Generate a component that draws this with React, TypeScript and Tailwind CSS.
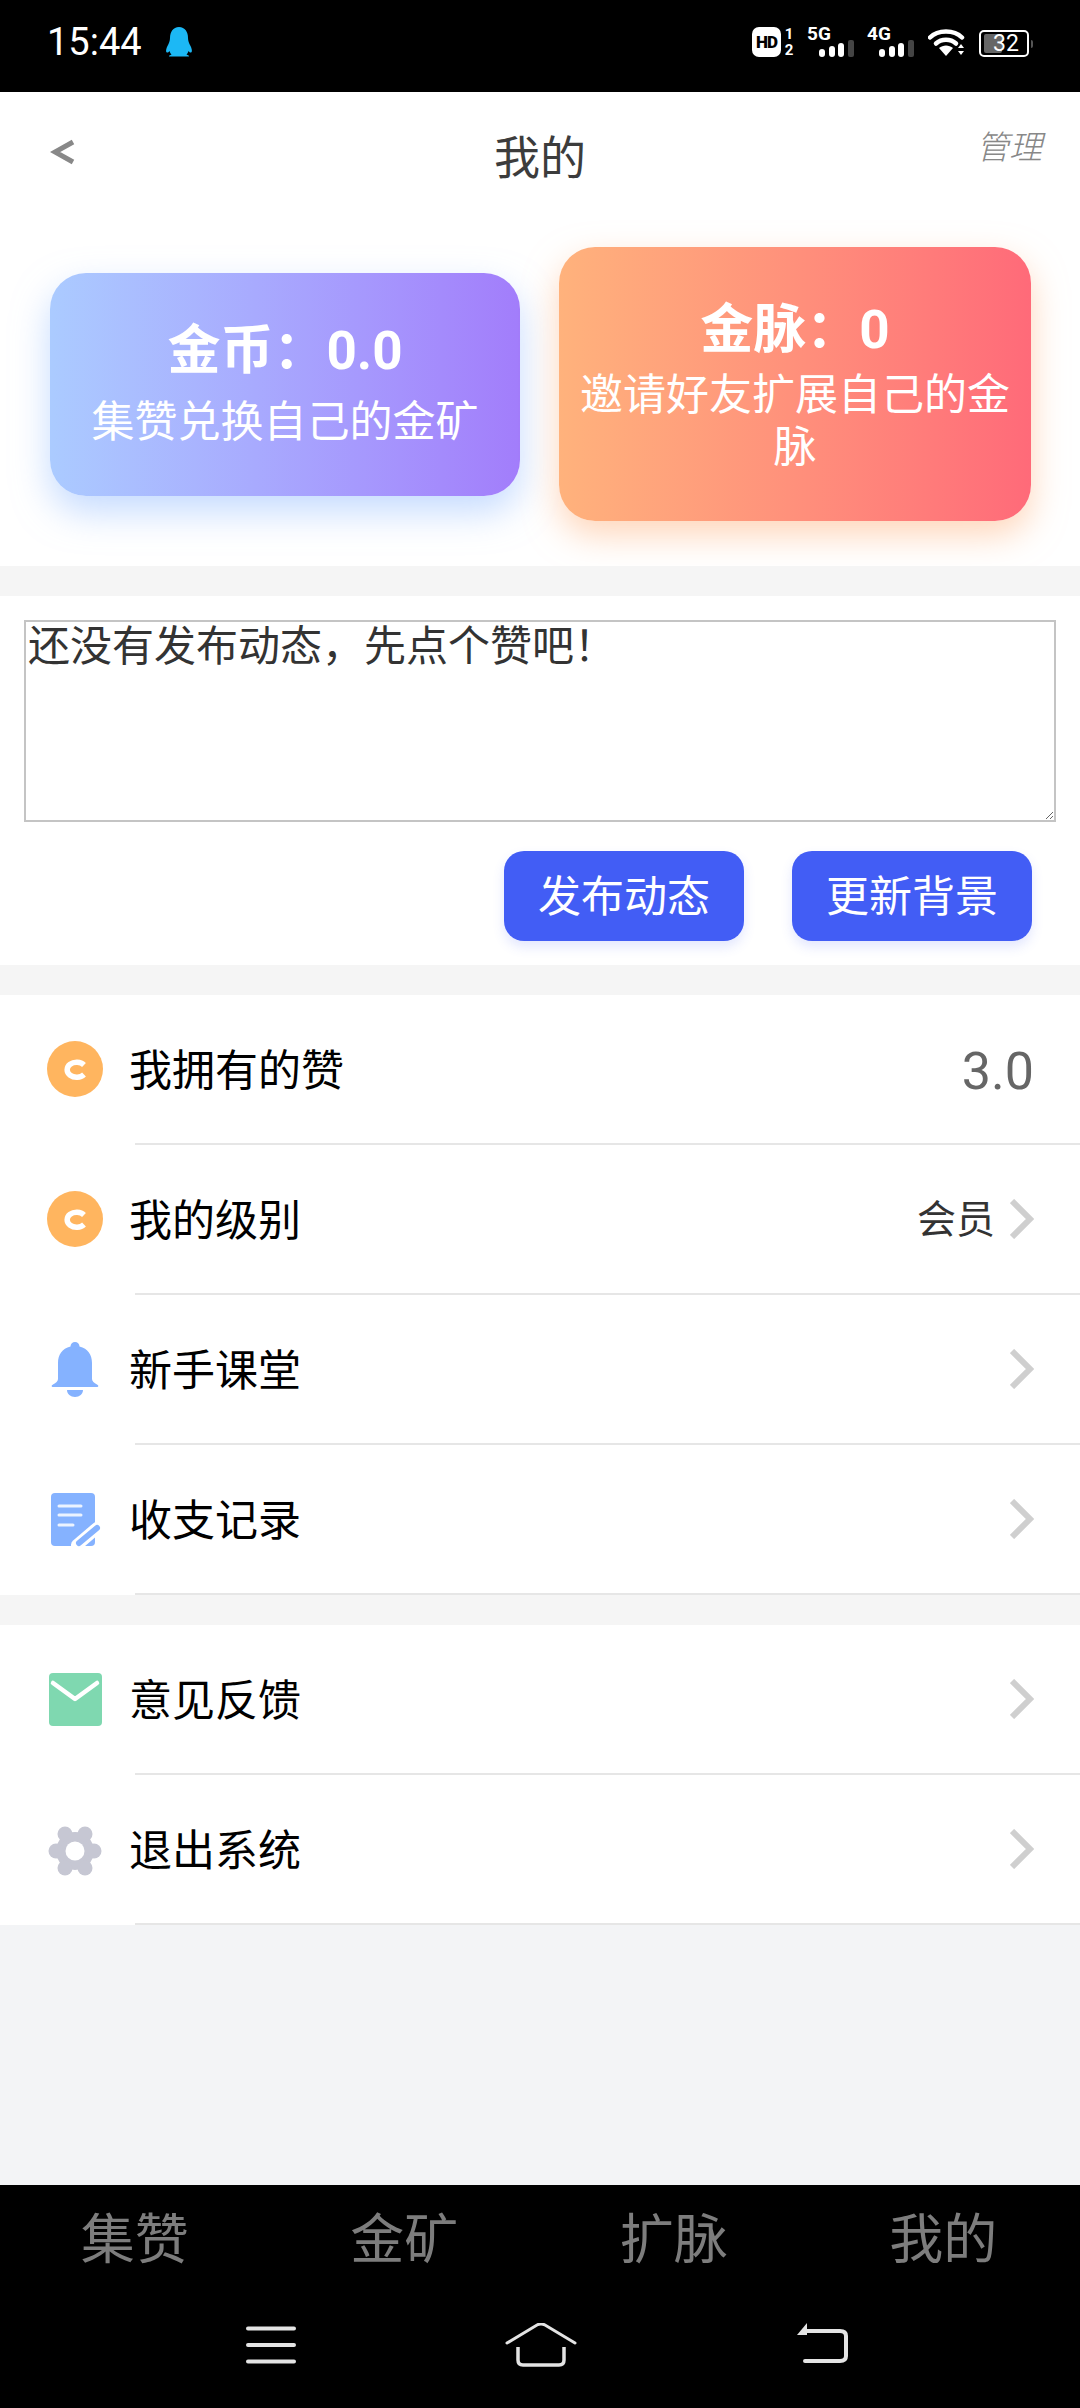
import React from "react";

const Signal = ({ label }: { label: string }) => (
  <div className="flex w-[48px] flex-col">
    <span className="h-[13px] text-[19px] leading-[13px] font-bold text-white">{label}</span>
    <svg width="36" height="17" viewBox="0 0 36 17" className="ml-[12px] block">
      <rect x="0" y="9" width="6" height="8" rx="3" fill="#fff" />
      <rect x="10" y="6" width="6" height="11" rx="3" fill="#fff" />
      <rect x="19" y="3" width="6" height="14" rx="3" fill="#fff" />
      <rect x="29" y="0" width="6" height="17" rx="2" fill="#444" />
    </svg>
  </div>
);

const Coin = () => (
  <svg width="56" height="56" viewBox="0 0 56 56">
    <circle cx="28" cy="28" r="28" fill="#ffb55f" />
    <path d="M37 24 A9.500 7.500 0 1 0 37 33.500" fill="none" stroke="#fff" strokeWidth="5.500" />
  </svg>
);

const Bell = () => (
  <svg width="56" height="56" viewBox="0 -1 56 56">
    <path d="M28 0a4.5 4.5 0 0 1 4.5 4.5C41 6.500 45 13 45 21v16c0 2 2 4 5 5.500 2 1 1.500 2.500 0 2.500H6c-1.500 0-2-1.500 0-2.500 3-1.500 5-3.500 5-5.500V21c0-8 4-14.500 12.500-16.500A4.500 4.500 0 0 1 28 0z" fill="#85b2ff" />
    <path d="M20 48h16c0 4-3.500 7-8 7s-8-3-8-7z" fill="#85b2ff" />
  </svg>
);

const Doc = () => (
  <svg width="56" height="56" viewBox="0 -1 56 56">
    <rect x="4" y="1" width="44" height="53" rx="4" fill="#85b2ff" />
    <path d="M12 14h22M12 23h22M12 33h14" stroke="#fff" strokeWidth="3" strokeLinecap="round" opacity="0.85" />
    <path d="M30 53 L50 36" stroke="#fff" strokeWidth="12" strokeLinecap="round" />
    <path d="M32 51 L50 36" stroke="#85b2ff" strokeWidth="6" strokeLinecap="round" />
  </svg>
);

const Mail = () => (
  <svg width="56" height="56" viewBox="0 -1 56 56">
    <rect x="2" y="1" width="53" height="53" rx="4" fill="#7fd8b0" />
    <path d="M6 11 L28 27 L50 11" fill="none" stroke="#fff" strokeWidth="4.500" strokeLinecap="round" strokeLinejoin="round" />
  </svg>
);

const Gear = () => (
  <svg width="56" height="56" viewBox="0 -2 56 56">
    <g fill="#c6c7d3">
      <circle cx="28" cy="28" r="19" />
      <circle cx="18" cy="11" r="7.500" />
      <circle cx="38" cy="11" r="7.500" />
      <circle cx="9" cy="28" r="7.500" />
      <circle cx="47" cy="28" r="7.500" />
      <circle cx="18" cy="45" r="7.500" />
      <circle cx="38" cy="45" r="7.500" />
    </g>
    <circle cx="28" cy="28" r="9.500" fill="#fff" />
  </svg>
);

const Chevron = () => (
  <svg width="24" height="40" viewBox="0 0 24 40" className="block">
    <path d="M2 2 L20 20 L2 38" fill="none" stroke="#cfcfcf" strokeWidth="6" />
  </svg>
);

const Row = ({
  icon,
  label,
  value,
  chevron = true,
}: {
  icon: React.ReactNode;
  label: string;
  value?: React.ReactNode;
  chevron?: boolean;
}) => (
  <div>
    <div className="flex h-[148px] items-center pr-[46px] pl-[47px]">
      <div className="h-[56px] w-[56px]">{icon}</div>
      <span className="ml-[26px] pt-[4px] text-[43px] leading-none text-black">{label}</span>
      <div className="ml-auto flex items-center gap-[15px]">
        {value}
        {chevron && <Chevron />}
      </div>
    </div>
    <div className="ml-[135px] h-[2px] bg-[#e6e6e6]" />
  </div>
);

export default function App() {
  return (
    <div className="flex h-[2408px] w-[1080px] flex-col overflow-hidden bg-[#f3f4f6] font-['Roboto','Noto_Sans_CJK_SC',sans-serif]">
      {/* status bar */}
      <div className="flex h-[92px] shrink-0 items-start justify-between bg-black pt-[27px] pr-[47px] pl-[47px]">
        <div className="flex h-[30px] items-center">
          <span className="text-[38px] leading-none text-white">15:44</span>
          <svg width="28" height="30" viewBox="0 0 28 30" className="ml-[23px]">
            <path d="M14 0c6 0 9 5 9 11 0 3 1 5 2.500 8 1.500 3 2 6 .5 6.500-1 .3-2-.5-2.500-1.500-.5 1.500-1 2.500-2 3.500 1.500.5 2.500 1 2.500 2H4c0-1 1-1.500 2.500-2-1-1-1.500-2-2-3.500-.5 1-1.500 1.800-2.500 1.500-1.500-.5-1-3.500.5-6.500C4 16 5 14 5 11 5 5 8 0 14 0z" fill="#1cb8f5" />
          </svg>
        </div>
        <div className="flex h-[30px] items-start">
          <div className="flex h-[30px] w-[29px] items-center justify-center rounded-[7px] bg-white text-[17px] leading-none font-black tracking-[-1px] text-black">
            HD
          </div>
          <div className="ml-[2px] flex h-[30px] w-[12px] flex-col items-center justify-between text-[15px] leading-[14px] font-bold text-white">
            <span>1</span>
            <span>2</span>
          </div>
          <div className="ml-[12px]">
            <Signal label="5G" />
          </div>
          <div className="ml-[12px]">
            <Signal label="4G" />
          </div>
          <svg width="38" height="28" viewBox="0 0 38 28" className="mt-[2px] ml-[13px]">
            <path d="M2 8.500 C10 0.500 26 0.500 34 8.500" fill="none" stroke="#fff" strokeWidth="4.500" strokeLinecap="round" />
            <path d="M8 14.500 C13.500 9.500 22.500 9.500 28 14.500" fill="none" stroke="#fff" strokeWidth="4.500" strokeLinecap="round" />
            <path d="M11 19 C15 15.500 21 15.500 25 19 L18 27 Z" fill="#fff" />
            <path d="M33 15 L30 19 L36 19 Z M30 22 L36 22 L33 26 Z" fill="#fff" />
          </svg>
          <div className="mt-[3px] ml-[13px] flex items-center">
            <div className="flex h-[27px] w-[50px] items-center rounded-[5px] border-2 border-white">
              <div className="ml-[3px] h-[19px] w-[18px] shrink-0 rounded-[2px] bg-[#666]" />
              <span className="ml-[-9px] text-[23px] leading-none text-white">32</span>
            </div>
            <div className="ml-[2px] h-[8px] w-[2px] rounded-r bg-[#555]" />
          </div>
        </div>
      </div>

      {/* header + cards */}
      <div className="h-[474px] shrink-0 bg-white">
        <div className="grid h-[128px] grid-cols-[1fr_auto_1fr] items-center px-[35px]">
          <svg width="26" height="26" viewBox="0 0 26 26" className="mb-[8px] ml-[15px]">
            <path d="M23 3 L5 13 L23 23" fill="none" stroke="#888" strokeWidth="5" />
          </svg>
          <span className="pt-[4px] text-[46px] leading-none text-[#3c3c3c]">我的</span>
          <span className="mr-[3px] mb-[18px] justify-self-end text-[33px] leading-none font-light text-[#888] italic">管理</span>
        </div>
        <div className="mt-[27px] flex h-[274px] items-center justify-between pr-[49px] pl-[50px]">
          <div className="flex h-[223px] w-[470px] flex-col items-center justify-center rounded-[36px] bg-gradient-to-r from-[#abcbff] to-[#a27dfb] text-white shadow-[0_16px_36px_rgba(150,190,255,0.55)]">
            <span className="text-[53px] leading-[70px] font-bold">金币：0.0</span>
            <span className="pt-[6px] text-[43px] leading-[60px]">集赞兑换自己的金矿</span>
          </div>
          <div className="flex h-[274px] w-[472px] flex-col items-center justify-center rounded-[36px] bg-gradient-to-r from-[#ffb27c] to-[#ff6a79] px-[20px] text-center text-white shadow-[0_14px_34px_rgba(255,180,130,0.55)]">
            <span className="text-[53px] leading-[70px] font-bold">金脉：0</span>
            <span className="pt-[4px] text-[43px] leading-[52px]">邀请好友扩展自己的金脉</span>
          </div>
        </div>
      </div>

      <div className="h-[30px] shrink-0 bg-[#f5f5f5]" />

      {/* post box */}
      <div className="h-[369px] shrink-0 bg-white px-[24px] pt-[24px]">
        <textarea
          readOnly
          defaultValue="还没有发布动态，先点个赞吧！"
          className="block h-[202px] w-[1032px] border-2 border-[#c4c4c4] px-[2px] py-0 text-[42px] leading-[50px] text-[#333] outline-none"
        />
        <div className="mt-[29px] flex justify-end gap-[48px] pr-[24px]">
          <button className="h-[90px] w-[240px] rounded-[20px] bg-[#425df5] pt-[2px] text-[43px] leading-none text-white shadow-[0_6px_12px_rgba(66,93,245,0.15)]">
            发布动态
          </button>
          <button className="h-[90px] w-[240px] rounded-[20px] bg-[#425df5] pt-[2px] text-[43px] leading-none text-white shadow-[0_6px_12px_rgba(66,93,245,0.15)]">
            更新背景
          </button>
        </div>
      </div>

      <div className="h-[30px] shrink-0 bg-[#f5f5f5]" />

      {/* list 1 */}
      <div className="shrink-0 bg-white">
        <Row
          icon={<Coin />}
          label="我拥有的赞"
          chevron={false}
          value={<span className="pt-[6px] text-[52px] leading-none text-[#666]">3.0</span>}
        />
        <Row
          icon={<Coin />}
          label="我的级别"
          value={<span className="pt-[2px] text-[39px] leading-none text-[#333]">会员</span>}
        />
        <Row icon={<Bell />} label="新手课堂" />
        <Row icon={<Doc />} label="收支记录" />
      </div>

      <div className="h-[30px] shrink-0 bg-[#f5f5f5]" />

      {/* list 2 */}
      <div className="shrink-0 bg-white">
        <Row icon={<Mail />} label="意见反馈" />
        <Row icon={<Gear />} label="退出系统" />
      </div>

      <div className="flex-1" />

      {/* bottom */}
      <div className="h-[223px] shrink-0 bg-black">
        <div className="grid h-[104px] grid-cols-4 items-center pt-[8px] pr-[2px] text-center text-[54px] leading-none text-[#7d7d7d]">
          <span>集赞</span>
          <span>金矿</span>
          <span>扩脉</span>
          <span>我的</span>
        </div>
        <div className="mt-[34px] flex items-start pl-[246px]">
          <svg width="50" height="38" viewBox="0 0 50 38" className="mt-[3px]">
            <path d="M2 2.500H48M2 19H48M2 35.500H48" stroke="#e4e4e4" strokeWidth="4" strokeLinecap="round" />
          </svg>
          <svg width="72" height="44" viewBox="0 0 72 44" className="ml-[209px]">
            <path d="M2 20 L32 2 Q36 0 40 2 L70 20" fill="none" stroke="#e4e4e4" strokeWidth="3" strokeLinecap="round" />
            <path d="M13 24 V37 Q13 42 18 42 H54 Q59 42 59 37 V24" fill="none" stroke="#e4e4e4" strokeWidth="3.500" />
          </svg>
          <svg width="52" height="42" viewBox="0 0 52 42" className="ml-[219px]">
            <path d="M11 0 L11 12 L1 12 Z" fill="#e4e4e4" />
            <path d="M10 8 H44 Q50 8 50 13 V33 Q50 38 44 38 H9" fill="none" stroke="#e4e4e4" strokeWidth="4" strokeLinecap="round" />
          </svg>
        </div>
      </div>
    </div>
  );
}
